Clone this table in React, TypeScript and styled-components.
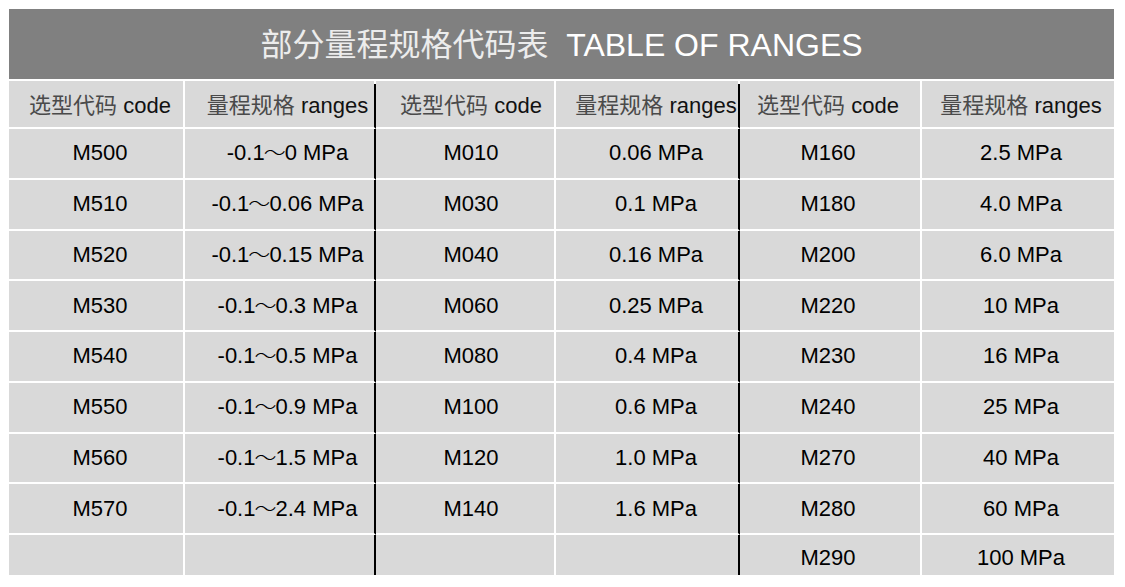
import styled, { createGlobalStyle } from 'styled-components';

const GlobalStyle = createGlobalStyle`
  html, body {
    margin: 0;
    padding: 0;
    background: #fff;
  }
  body {
    font-family: "Liberation Sans", "Noto Sans CJK SC", sans-serif;
  }
`;

type Row = [string, string, string, string, string, string];

const rows: Row[] = [
  ['M500', '-0.1～0 MPa', 'M010', '0.06 MPa', 'M160', '2.5 MPa'],
  ['M510', '-0.1～0.06 MPa', 'M030', '0.1 MPa', 'M180', '4.0 MPa'],
  ['M520', '-0.1～0.15 MPa', 'M040', '0.16 MPa', 'M200', '6.0 MPa'],
  ['M530', '-0.1～0.3 MPa', 'M060', '0.25 MPa', 'M220', '10 MPa'],
  ['M540', '-0.1～0.5 MPa', 'M080', '0.4 MPa', 'M230', '16 MPa'],
  ['M550', '-0.1～0.9 MPa', 'M100', '0.6 MPa', 'M240', '25 MPa'],
  ['M560', '-0.1～1.5 MPa', 'M120', '1.0 MPa', 'M270', '40 MPa'],
  ['M570', '-0.1～2.4 MPa', 'M140', '1.6 MPa', 'M280', '60 MPa'],
  ['', '', '', '', 'M290', '100 MPa'],
];

// horizontal nudge of the text per column, as in the original sheet
const shifts = [4, 8, 6, 9, -2, 3];

const headers = [
  ['选型代码', 'code'],
  ['量程规格', 'ranges'],
];

// split the range text so the wave dash can be drawn lighter
function RangeText({ text }: { text: string }) {
  const parts = text.split('～');
  if (parts.length < 2) return <span>{text}</span>;
  return (
    <span>
      {parts[0]}
      <Wave>～</Wave>
      {parts[1]}
    </span>
  );
}

export default function App() {
  return (
    <>
      <GlobalStyle />
      <Page>
        <TitleBar>
          <span>
            <Han>部分量程规格代码表</Han>&nbsp;&nbsp;TABLE OF RANGES
          </span>
        </TitleBar>
        <Grid>
          {[0, 1, 2, 3, 4, 5].map((col) => {
            const [han, latin] = headers[col % 2];
            return (
              <HeadCell key={`h${col}`} $divider={col === 1 || col === 3} $last={col === 5} $shift={shifts[col]}>
                <span>
                  <HeadHan>{han}</HeadHan> {latin}
                </span>
              </HeadCell>
            );
          })}
          {rows.map((row, r) =>
            row.map((text, col) => (
              <Cell
                key={`${r}-${col}`}
                $divider={col === 1 || col === 3}
                $last={col === 5}
                $bottom={r === rows.length - 1}
                $shift={shifts[col]}
              >
                <RangeText text={text} />
              </Cell>
            )),
          )}
        </Grid>
      </Page>
    </>
  );
}

const Page = styled.div`
  padding: 9px 0 0 9px;
  width: 1105px;
`;

const TitleBar = styled.div`
  height: 70px;
  background: #808080;
  color: #fff;
  font-size: 32px;
  line-height: 32px;
  display: flex;
  align-items: center;
  justify-content: center;
  padding-top: 2px;
  box-sizing: border-box;
  margin-bottom: 2px;
`;

const Han = styled.span`
  color: #ececec;
`;

const Grid = styled.div`
  display: grid;
  grid-template-columns: 176px 191px 180px 184px 182px 192px;
  grid-template-rows: 48px repeat(8, 50.75px) 40px;
`;

type CellProps = {
  $divider?: boolean;
  $last?: boolean;
  $bottom?: boolean;
  $shift: number;
};

const Cell = styled.div<CellProps>`
  box-sizing: border-box;
  background: #d9d9d9;
  display: flex;
  align-items: center;
  justify-content: center;
  padding-left: ${(p) => Math.max(p.$shift, 0) * 2}px;
  padding-right: ${(p) => Math.max(-p.$shift, 0) * 2}px;
  padding-top: ${(p) => (p.$bottom ? '5px' : '0')};
  border-right: ${(p) => (p.$last ? 'none' : p.$divider ? '2px solid #000' : '2px solid #fff')};
  border-bottom: ${(p) => (p.$bottom ? 'none' : '2px solid #fff')};
  font-size: 22px;
  line-height: 22px;
  color: #000;
  white-space: nowrap;
`;

const HeadCell = styled(Cell)`
  color: #111;
  padding-top: 1px;
  padding-bottom: 1px;
  border-top: 3px solid #d9d9d9;
  border-right-color: ${(p) => (p.$divider ? '#000' : '#fff')};
  background-clip: padding-box;
  position: relative;

  &::before {
    content: '';
    position: absolute;
    top: -3px;
    right: -2px;
    width: 2px;
    height: 3px;
    background: ${(p) => (p.$last ? 'transparent' : p.$divider ? '#fff' : '#fff')};
  }
`;

const HeadHan = styled.span`
  color: #4a4a4a;
`;

const Wave = styled.span`
  font-weight: 300;
  display: inline-block;
  transform: scaleY(0.8);
  margin: 0 -1px;
`;
